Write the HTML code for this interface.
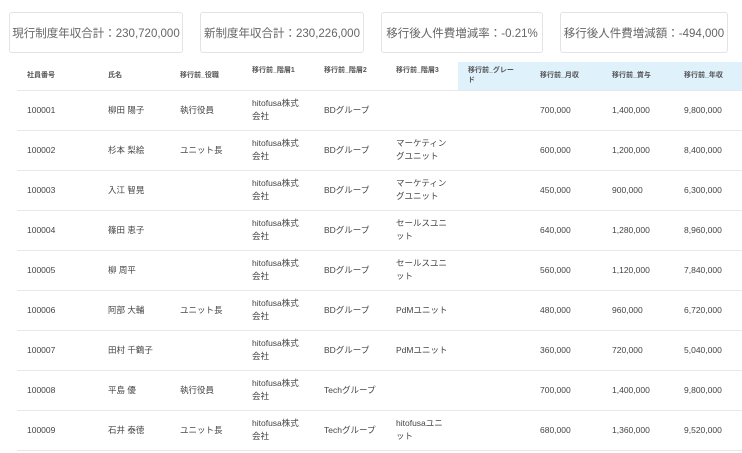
<!DOCTYPE html>
<html><head><meta charset="utf-8"><style>
*{margin:0;padding:0;box-sizing:border-box}
body{width:742px;height:453px;background:#fff;font-family:"Liberation Sans","Noto Sans CJK JP",sans-serif;color:#333;overflow:hidden;position:relative}
.card{position:absolute;top:12px;height:41px;border:1px solid #e3e3e3;border-radius:3px;font-size:11.5px;color:#666;display:flex;align-items:center;justify-content:center;white-space:nowrap}
table{position:absolute;left:17px;top:62px;border-collapse:collapse;table-layout:fixed;width:725px}
td,th{font-size:8.5px;line-height:13px;vertical-align:middle;text-align:left;padding:0 0 0 10px;border-bottom:1px solid #e8e8e8;color:#444}
th{height:28px;font-size:7px;font-weight:bold;color:#555;line-height:10px;vertical-align:top;padding-top:4px}
th.c{vertical-align:middle;padding-top:0}
th.b{background:#dff1fb}
td{height:40px}
</style></head><body>
<div class="card" style="left:9px;width:174px">現行制度年収合計：230,720,000</div>
<div class="card" style="left:200px;width:164px">新制度年収合計：230,226,000</div>
<div class="card" style="left:381px;width:162px">移行後人件費増減率：-0.21%</div>
<div class="card" style="left:560px;width:168px">移行後人件費増減額：-494,000</div>
<table>
<colgroup><col style="width:81px"><col style="width:72px"><col style="width:72px"><col style="width:72px"><col style="width:72px"><col style="width:72px"><col style="width:72px"><col style="width:72px"><col style="width:72px"><col style="width:68px"></colgroup>
<tr><th class="c">社員番号</th><th class="c">氏名</th><th class="c">移行前_役職</th><th>移行前_階層1</th><th>移行前_階層2</th><th>移行前_階層3</th><th class="b">移行前_グレー<br>ド</th><th class="b c">移行前_月収</th><th class="b c">移行前_賞与</th><th class="b c">移行前_年収</th></tr>
<tr><td>100001</td><td>柳田 陽子</td><td>執行役員</td><td>hitofusa株式<br>会社</td><td>BDグループ</td><td></td><td></td><td>700,000</td><td>1,400,000</td><td>9,800,000</td></tr>
<tr><td>100002</td><td>杉本 梨絵</td><td>ユニット長</td><td>hitofusa株式<br>会社</td><td>BDグループ</td><td>マーケティン<br>グユニット</td><td></td><td>600,000</td><td>1,200,000</td><td>8,400,000</td></tr>
<tr><td>100003</td><td>入江 智晃</td><td></td><td>hitofusa株式<br>会社</td><td>BDグループ</td><td>マーケティン<br>グユニット</td><td></td><td>450,000</td><td>900,000</td><td>6,300,000</td></tr>
<tr><td>100004</td><td>篠田 恵子</td><td></td><td>hitofusa株式<br>会社</td><td>BDグループ</td><td>セールスユニ<br>ット</td><td></td><td>640,000</td><td>1,280,000</td><td>8,960,000</td></tr>
<tr><td>100005</td><td>柳 周平</td><td></td><td>hitofusa株式<br>会社</td><td>BDグループ</td><td>セールスユニ<br>ット</td><td></td><td>560,000</td><td>1,120,000</td><td>7,840,000</td></tr>
<tr><td>100006</td><td>阿部 大輔</td><td>ユニット長</td><td>hitofusa株式<br>会社</td><td>BDグループ</td><td>PdMユニット</td><td></td><td>480,000</td><td>960,000</td><td>6,720,000</td></tr>
<tr><td>100007</td><td>田村 千鶴子</td><td></td><td>hitofusa株式<br>会社</td><td>BDグループ</td><td>PdMユニット</td><td></td><td>360,000</td><td>720,000</td><td>5,040,000</td></tr>
<tr><td>100008</td><td>平島 優</td><td>執行役員</td><td>hitofusa株式<br>会社</td><td>Techグループ</td><td></td><td></td><td>700,000</td><td>1,400,000</td><td>9,800,000</td></tr>
<tr><td>100009</td><td>石井 泰徳</td><td>ユニット長</td><td>hitofusa株式<br>会社</td><td>Techグループ</td><td>hitofusaユニ<br>ット</td><td></td><td>680,000</td><td>1,360,000</td><td>9,520,000</td></tr>
</table>
</body></html>
